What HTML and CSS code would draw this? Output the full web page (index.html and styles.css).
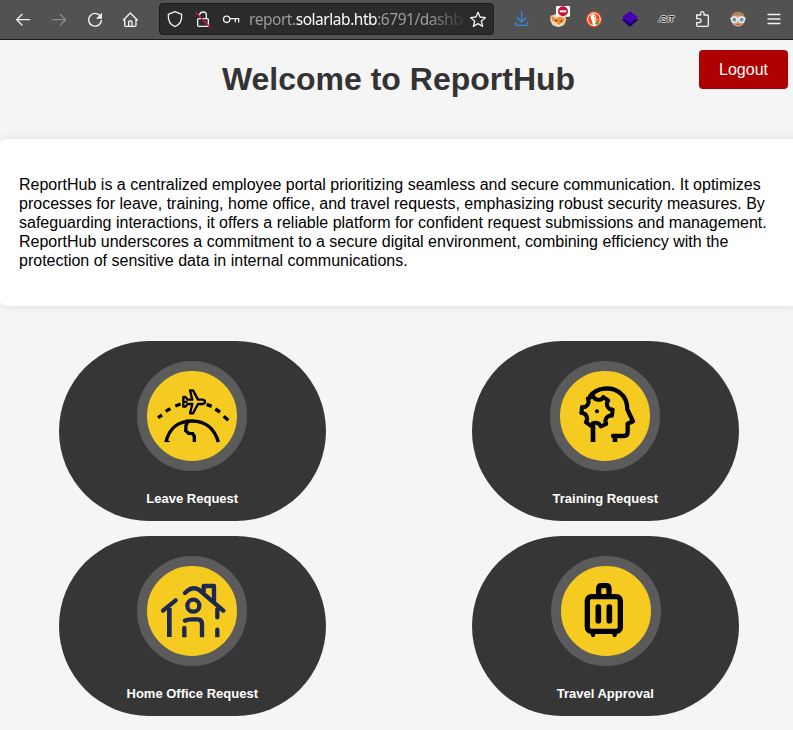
FILE: index.html
```html
<!DOCTYPE html>
<html lang="en">
<head>
<meta charset="utf-8">
<title>ReportHub</title>
<link rel="stylesheet" href="styles.css">
</head>
<body>
<nav class="toolbar">
  <svg class="tool" viewBox="15 0 108 117"><path d="M89 59H50M66 43L50 59L66 75"/></svg>
  <svg class="tool disabled" viewBox="123 0 108 117"><path d="M157 59H197M181 43L197 59L181 75"/></svg>
  <svg class="tool" viewBox="231 0 108 117"><path d="M303 53A19 19 0 1 0 304 61"/><path class="fill" d="M306 38V56H288Z"/></svg>
  <svg class="tool" viewBox="339 0 108 117"><path d="M370 60L391 39L412 60M374 57V76Q374 79 377 79H405Q408 79 408 76V57M386 79V66Q386 63 389 63H393Q396 63 396 66V79"/></svg>
  <div class="urlbar">
    <svg viewBox="483 12 84 90"><path d="M525 35L545 43C546 61 540 75 525 80C510 75 504 61 505 43Z"/></svg>
    <svg viewBox="567 12 84 90"><path d="M599 44Q601 36 610 36Q619 36 619 46V55M596 56H622Q625 56 625 59V76Q625 79 622 79H596Q593 79 593 76V59Q593 56 596 56"/><path class="slash" d="M589 39L629 80"/></svg>
    <svg viewBox="651 12 84 90"><circle cx="680" cy="58" r="9.5"/><path d="M690 56H716V66M706 57V65"/></svg>
    <span class="url">report.<b>solarlab.htb</b>:6791/dashb<i>o</i></span>
    <svg viewBox="672 12 84 90"><path d="M714 37L720 51L736 53L724 63L728 79L714 71L700 79L704 63L692 53L708 51Z"/></svg>
  </div>
  <div class="extensions">
    <svg class="tool download" viewBox="12 0 108 117"><path d="M65 35V66M52 53L65 66L78 53M47 67V72Q47 76 51 76H79Q83 76 83 72V67"/></svg>
    <svg class="tool plain" viewBox="120 0 108 117"><circle cx="175" cy="60" r="21" fill="#8e7760"/><path d="M151 47L167 43L176 48L194 44L199 60L192 75L176 81L158 75L151 62Z" fill="#e9cba1"/><path d="M155 48L170 58L176 49L195 56L188 73L170 76L157 65Z" fill="#f08b28"/><path d="M151 60L165 65L178 75L193 61L187 77L174 81L158 75Z" fill="#ead9bd"/><circle cx="168" cy="62" r="2.5" fill="#49301b"/><circle cx="184" cy="64" r="2.5" fill="#49301b"/><rect x="168" y="18" width="42" height="32" rx="3" fill="#fff"/><circle cx="189" cy="34" r="15" fill="#c90e35"/><path d="M179 31H199V37H179Z" fill="#fff"/></svg>
    <svg class="tool plain" viewBox="228 0 108 117"><circle cx="282" cy="58" r="24" fill="#f04922"/><circle cx="282" cy="58" r="19" fill="none" stroke="#fff" stroke-width="3"/><path d="M272 46Q277 40 285 44Q290 48 288 58L289 74L279 75Q276 62 272 54Z" fill="#fff"/><path d="M284 57L297 58L289 64H284Z" fill="#f9b91f"/><path d="M284 68L296 65V74L287 73Z" fill="#4ba542"/><circle cx="284" cy="51" r="2" fill="#315a92"/></svg>
    <svg class="tool plain" viewBox="336 0 108 117"><path d="M366 59L390 44L414 59L390 81Z" fill="#1d006d"/><path d="M366 52L390 33L414 52L390 70Z" fill="#4700af"/></svg>
    <span class="git">.GIT</span>
    <svg class="tool" viewBox="552 0 108 117"><path d="M590 45H602V40Q602 35 607 35Q612 35 612 40V45H622Q625 45 625 48V76Q625 79 622 79H593Q590 79 590 76V68H596Q603 68 603 62Q603 56 596 56H590Z"/></svg>
    <svg class="tool plain" viewBox="660 0 108 117"><ellipse cx="714" cy="58" rx="21" ry="22" fill="#d6a17c"/><path d="M693 54Q694 35 714 35Q734 35 735 54L725 47L704 46Z" fill="#ad8057"/><path d="M692 56H736" stroke="#e5eef0" stroke-width="4"/><circle cx="703" cy="59" r="8" fill="#6797aa" stroke="#e7f1f4" stroke-width="4"/><circle cx="725" cy="59" r="8" fill="#6797aa" stroke="#e7f1f4" stroke-width="4"/><path d="M708 73H720" stroke="#a75c50" stroke-width="3"/></svg>
    <svg class="tool" viewBox="768 0 108 117"><path d="M804 43.5H840M804 57H840M804 70.5H840"/></svg>
  </div>
</nav>
<header class="header">
  <h1>Welcome to ReportHub</h1>
  <a class="logout">Logout</a>
</header>
<section class="intro">
  <p>ReportHub is a centralized employee portal prioritizing seamless and secure communication. It optimizes processes for leave, training, home office, and travel requests, emphasizing robust security measures. By safeguarding interactions, it offers a reliable platform for confident request submissions and management. ReportHub underscores a commitment to a secure digital environment, combining efficiency with the protection of sensitive data in internal communications.</p>
</section>
<main class="cards">
  <a class="card">
    <svg class="badge" viewBox="45 48 270 270">
      <path stroke-width="10" d="M78 188L90 180M101 169L115 161M130 153L146 147M224 148L239 154M250 162L264 171M275 184L289 196"/>
      <path stroke-width="7" stroke-linejoin="round" d="M154 126H160L167 134H181L174 106H183L198 134H211Q219 135 219 140.5Q219 147 211 147H198L183 175H174L181 147H167L160 155H154ZM154 140.5H166"/>
      <path stroke-width="10" d="M102 261C111 220 140 198 180 198C221 198 248 222 259 261M168 199L162 211L161 227L170 235L182 236L187 244V261"/>
      <path d="M97 261L102 252L116 261Z" fill="#000" stroke="none"/>
    </svg>
    <span>Leave Request</span>
  </a>
  <a class="card">
    <svg class="badge" viewBox="45 48 270 270">
      <path stroke-width="13" stroke-linejoin="round" stroke-linecap="round" d="M135 124C155 98 197 93 223 112C243 127 246 143 247 163L264 199L248 206V231Q248 243 237 243H204"/>
      <path stroke-width="14" d="M210 243V261M144 261V210"/>
      <g transform="translate(156 169) rotate(5)" stroke-width="12" stroke-linecap="round" stroke-linejoin="round">
        <path id="tooth" d="M46 -9V9L37 10Q28 16 27.2 27L30.8 35.3"/>
        <use href="#tooth" transform="rotate(60)"/>
        <use href="#tooth" transform="rotate(120)"/>
        <use href="#tooth" transform="rotate(180)"/>
        <use href="#tooth" transform="rotate(240)"/>
        <use href="#tooth" transform="rotate(300)"/>
      </g>
      <circle cx="156" cy="169" r="6" fill="#000" stroke="none"/>
    </svg>
    <span>Training Request</span>
  </a>
  <a class="card">
    <svg class="badge home" viewBox="45 48 270 270">
      <path stroke-width="13" d="M93 182L131 151M159 129Q182 106 203 121L274 182M215 125V108H246V155M157 261V234M159 212Q165 208 178 208H198Q210 209 210 222V261M256 178V202M256 261V239" stroke-linecap="round" stroke-linejoin="round"/>
      <path stroke-width="14" d="M112 174V261"/><circle cx="184" cy="167" r="18" stroke-width="13"/>
      <path d="M90 261.5H280V280H90Z" fill="#f5cb22" stroke="none"/>
    </svg>
    <span>Home Office Request</span>
  </a>
  <a class="card">
    <svg class="badge nudge" viewBox="48 48 270 270">
      <rect x="127" y="140" width="99" height="104" rx="12" stroke-width="16"/>
      <path stroke-width="16" stroke-linejoin="round" d="M161 139V116Q161 107 169 107H184Q192 107 192 116V139"/>
      <path stroke-width="17" stroke-linecap="round" d="M160 171V212M193 171V212"/>
      <path stroke-width="13" stroke-linecap="round" d="M144 247V255M209 247V255"/>
    </svg>
    <span>Travel Approval</span>
  </a>
</main>
</body>
</html>
```
FILE: styles.css
```css
* { box-sizing: border-box; }
body {
  margin: 0;
  height: 730px;
  overflow: hidden;
  background: #f5f5f5;
  color: #000;
  font: 16px/19px "Liberation Sans", Arial, sans-serif;
}
svg { display: block; flex: none; }
.toolbar {
  display: flex;
  align-items: flex-start;
  height: 40px;
  padding-left: 5px;
  background: #525252;
  border-bottom: 1px solid #1d1d1d;
}
.toolbar svg {
  fill: none;
  stroke: #f1f1f1;
  stroke-width: 4;
  stroke-linecap: round;
  stroke-linejoin: round;
}
.toolbar .tool { width: 36px; height: 39px; }
.toolbar .disabled { stroke: #8c8c8c; }
.toolbar .plain { stroke: none; }
.toolbar .download { stroke: #3988e5; }
.toolbar .fill { fill: #f1f1f1; stroke: none; }
.toolbar .slash { stroke: #db174b; }
.urlbar {
  display: flex;
  align-items: center;
  width: 335px;
  height: 32px;
  margin: 3px 10px 0;
  padding: 0 1px;
  background: #2b2b2b;
  border: 1px solid #1b1b1b;
  border-radius: 4px;
}
.urlbar svg { width: 28px; height: 30px; }
.url {
  width: 215px;
  margin-left: 4px;
  white-space: nowrap;
  color: #9b9b9b;
  font: 15.5px/30px "Noto Sans", sans-serif;
  letter-spacing: -0.46px;
  -webkit-mask-image: linear-gradient(to right, #000 180px, transparent 218px);
  mask-image: linear-gradient(to right, #000 180px, transparent 218px);
}
.url b { color: #fbfbfb; font-weight: 400; }
.url i { font-style: normal; }
.extensions { display: flex; }
.git {
  width: 36px;
  color: #000;
  font: 9px/39px "Liberation Sans", Arial, sans-serif;
  letter-spacing: -0.3px;
  text-align: center;
  text-shadow: 1px 0 #ddd, -1px 0 #ddd, 0 1px #ddd, 0 -1px #ddd;
}
.header {
  display: flex;
  align-items: flex-start;
  height: 99px;
  padding: 10px 5px 0 98px;
}
h1 {
  flex: 1;
  margin: 11px 0 0;
  color: #333;
  font-size: 32px;
  line-height: 37px;
  text-align: center;
}
.logout {
  width: 89px;
  height: 39px;
  border-radius: 4px;
  background: #ae0000;
  color: #fff;
  line-height: 39px;
  text-align: center;
}
.intro {
  height: 167px;
  margin: 0 -7px 0 -1px;
  padding: 36px 20px;
  border-radius: 8px;
  background: #fff;
  box-shadow: 0 0 10px rgba(0, 0, 0, .1);
}
.intro p { width: 760px; margin: 0; }
.cards {
  display: grid;
  grid-template-columns: 266.5px 266.5px;
  gap: 15px 146.5px;
  margin: 35px 0 0 59px;
}
.card {
  display: flex;
  flex-direction: column;
  align-items: center;
  height: 180px;
  padding-top: 20px;
  border-radius: 90px;
  background: #363636;
  color: #fff;
  font-size: 13px;
  font-weight: bold;
  line-height: 15px;
}
.badge {
  width: 110px;
  height: 110px;
  margin-bottom: 20px;
  border: 10px solid #5b5b5b;
  border-radius: 50%;
  background: #f5cb22;
  fill: none;
  stroke: #000;
}
.home { stroke: #1d2850; }
.nudge { margin-left: 1px; }
```
